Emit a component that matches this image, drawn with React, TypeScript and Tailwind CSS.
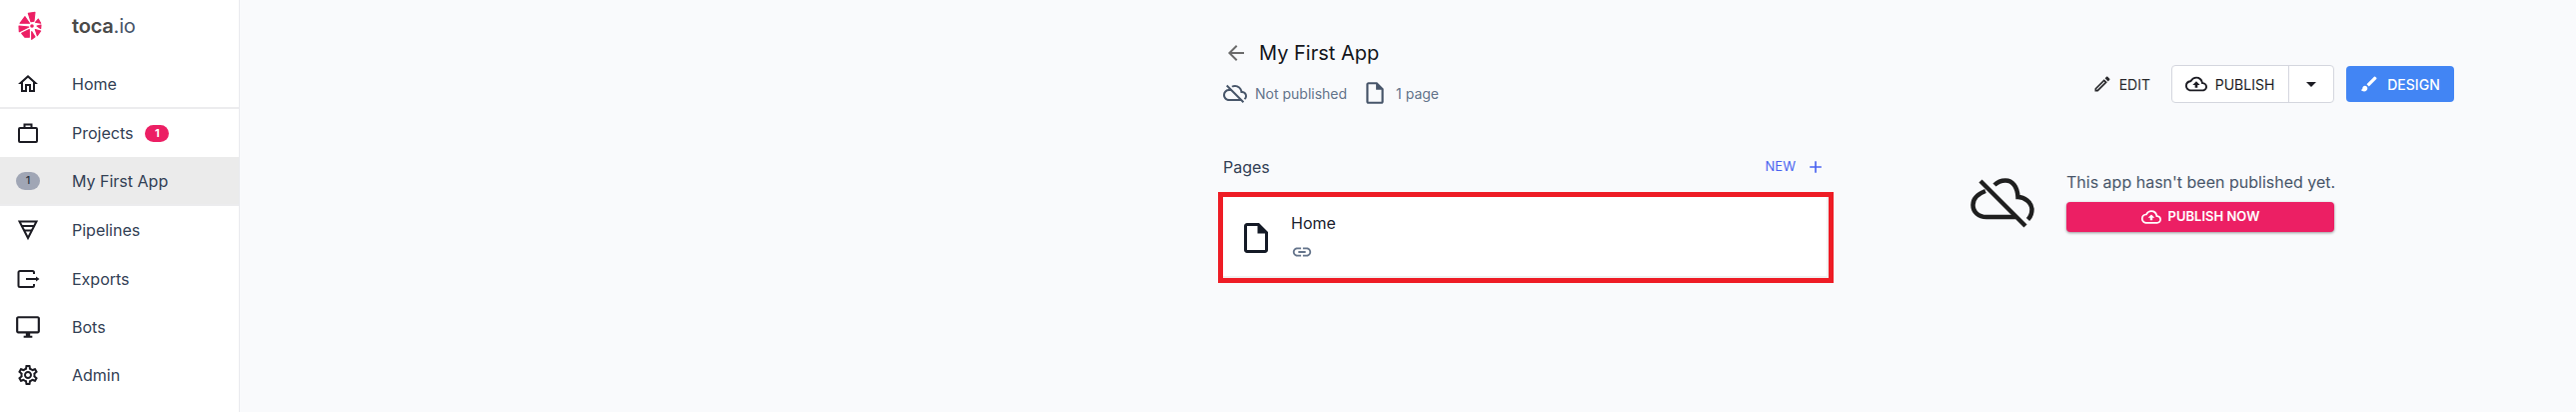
import React from "react";
import {
  MdOutlineHome, MdOutlineDesktopWindows, MdOutlineSettings, MdOutlineCloudOff, MdOutlineCloudUpload,
  MdOutlineEdit, MdBrush, MdOutlineInsertDriveFile, MdLink, MdArrowBack, MdArrowDropDown, MdAdd,
} from "react-icons/md";

const Logo = () => (
  <svg width="24" height="30" viewBox="0 0 24 30" className="shrink-0">
    <g fill="#ec1f64" stroke="#ec1f64" strokeWidth="1.100" strokeLinejoin="round">
      <path d="M10.300 2.300 17 1.300 16 10.300 13 10.800Z" />
      <path d="M2 12.300 7 5.700 11.500 12.300Z" />
      <path d="M1 15 10.800 16 1.300 20.700Z" />
      <path d="M3.700 22.300 11.300 18.500 11.300 26.300 7 26.300Z" />
      <path d="M13.700 20.500 17 25.700 13.700 28.300Z" />
      <path d="M17.300 18.500 22.700 20 19.300 24.700Z" />
      <path d="M19 15 23 14 22.700 17.500Z" />
      <path d="M17.500 11.300 20.300 8 22.700 12.300Z" />
    </g>
    <circle cx="14" cy="15" r="1.800" fill="#ec1f64" />
  </svg>
);

const Briefcase = () => (
  <svg width="24" height="24" viewBox="0 0 24 24" fill="none" stroke="currentColor" strokeWidth="2">
    <rect x="3" y="7" width="18" height="14" rx="1" />
    <path d="M8.500 7V3.500h7V7" />
  </svg>
);
const Pipeline = () => (
  <svg width="24" height="24" viewBox="0 0 24 24" fill="none" stroke="currentColor" strokeWidth="2">
    <path d="M3.500 3.500h17L12 20Z" strokeLinejoin="miter" />
    <path d="M5 8h14M8 12.500h8" />
  </svg>
);
const ExportIcon = () => (
  <svg width="24" height="24" viewBox="0 0 24 24" fill="none" stroke="currentColor" strokeWidth="2">
    <path d="M18 7V5.500A1.500 1.500 0 0 0 16.500 4H4A1.500 1.500 0 0 0 2.500 5.500v13A1.500 1.500 0 0 0 4 20h12.500a1.500 1.500 0 0 0 1.500-1.500V17" />
    <path d="M10 12h11" />
    <path d="M20 9.500 23.500 12 20 14.500Z" fill="currentColor" stroke="none" />
  </svg>
);
const BigCloudOff = () => (
  <svg width="64" height="50" viewBox="0 0 64 50" fill="none" stroke="#1f1f1f" strokeWidth="4.500">
    <path d="M10 3 L55 48" />
    <path d="M24 7C27 4 31 2.500 35 2.500C42 2.500 47 8.500 47.500 19C54 19 61 24.500 61.500 31C61.500 36 60 39 57.500 41.500" />
    <path d="M15 13C7 16 2.500 21 2.500 27C2.500 34 8 39 16 39H45" />
  </svg>
);

const rows = [
  { label: "Home", icon: <MdOutlineHome size={24} />, border: true, h: "h-[49px]" },
  { label: "Projects", icon: <Briefcase />, badge: true, h: "h-[48px]" },
  { label: "My First App", num: true, active: true, h: "h-[49px]" },
  { label: "Pipelines", icon: <Pipeline />, h: "h-[48px]" },
  { label: "Exports", icon: <ExportIcon />, h: "h-[49px]" },
  { label: "Bots", icon: <MdOutlineDesktopWindows size={26} />, h: "h-[48px]" },
  { label: "Admin", icon: <MdOutlineSettings size={24} />, h: "h-[48px]" },
];

export default function App() {
  return (
    <div className="flex h-[412px] w-[2578px] overflow-hidden bg-[#f9fafc] font-['Inter',sans-serif] text-[#334155]">
      <aside className="h-full w-[240px] shrink-0 border-r border-[#e9eaee] bg-white">
        <div className="flex h-[60px] items-center pb-[8px] pl-[18px]">
          <Logo />
          <span className="ml-[30px] text-[20px] tracking-[-0.2px]">
            <span className="font-semibold text-[#4a4a4a]">toca</span>
            <span className="font-normal text-[#475569]">.io</span>
          </span>
        </div>
        {rows.map((r) => (
          <div
            key={r.label}
            className={`flex items-center ${r.h} ${r.border ? "border-b-2 border-[#ececee]" : ""} ${r.active ? "border-b-2 border-[#ececee] bg-[#ebebeb]" : ""}`}
          >
            <div className="flex w-[72px] shrink-0 justify-center pr-[16px] text-[#1b1b22]">
              {r.num ? (
                <span className="flex h-[18px] w-[24px] items-center justify-center rounded-full bg-[#a0a6b5] text-[11px] font-medium text-[#2c3340]">1</span>
              ) : r.icon}
            </div>
            <span className="text-[16px] leading-none text-[#334155]">{r.label}</span>
            {r.badge && (
              <span className="ml-[12px] flex h-[17px] w-[24px] items-center justify-center rounded-full bg-[#ec1f64] text-[11px] font-bold text-white">1</span>
            )}
          </div>
        ))}
      </aside>
      <main className="flex-1 pl-[980px]">
        <div className="flex w-[1236px] items-start justify-between pl-[4px] pt-[41px]">
          <div>
            <div className="flex h-[24px] items-center">
              <MdArrowBack size={24} className="ml-[1px] text-[#6b6b6b]" />
              <h1 className="ml-[11px] text-[20px] font-normal leading-none text-[#14161c]">My First App</h1>
            </div>
            <div className="mt-[18px] flex h-[20px] items-center text-[14px] text-[#64748b]">
              <MdOutlineCloudOff size={24} className="text-[#475569]" />
              <span className="ml-[8px]">Not published</span>
              <MdOutlineInsertDriveFile size={26} className="ml-[15px] text-[#475569]" />
              <span className="ml-[8px]">1 page</span>
            </div>
          </div>
          <div className="mt-[24px] flex items-center">
            <MdOutlineEdit size={20} className="text-[#27272a]" />
            <span className="ml-[7px] text-[14px] font-normal text-[#27272a]">EDIT</span>
            <div className="ml-[21px] flex h-[38px] w-[163px] items-stretch rounded-[4px] border border-[#d4d6de] bg-white text-[#1b1b22]">
              <div className="flex w-[117px] items-center justify-center gap-[8px] border-r border-[#d4d6de] pr-[1px]">
                <MdOutlineCloudUpload size={22} />
                <span className="text-[14px]">PUBLISH</span>
              </div>
              <div className="flex flex-1 items-center justify-center">
                <MdArrowDropDown size={24} />
              </div>
            </div>
            <button className="ml-[12px] flex h-[36px] w-[108px] items-center justify-center gap-[8px] rounded-[4px] bg-[#4285f4] pr-[1px] text-[14px] font-medium text-white">
              <MdBrush size={20} />
              DESIGN
            </button>
          </div>
        </div>
        <div className="mt-[53px] flex w-[1236px] items-start">
          <section className="w-[616px]">
            <div className="flex h-[22px] items-center justify-between pl-[4px] pr-[9px]">
              <span className="text-[16px] text-[#334155]">Pages</span>
              <span className="flex items-center text-[13px] text-[#4a63f0]">
                NEW
                <MdAdd size={20} className="ml-[10px]" />
              </span>
            </div>
            <div className="ml-[-1px] mr-[1px] mt-[14px] flex h-[91px] items-center border-[5px] border-[#ee1c25] bg-white pl-[15px] shadow-[inset_-2px_-2px_0_#f0f0f0]">
              <MdOutlineInsertDriveFile size={36} className="text-[#141a26]" />
              <div className="ml-[17px] pt-[1px]">
                <div className="text-[16px] leading-[20px] text-[#1b2230]">Home</div>
                <MdLink size={22} className="mt-[8px] text-[#64748b]" />
              </div>
            </div>
          </section>
          <section className="ml-[136px] flex items-start pt-[16px]">
            <div className="mt-[6px]"><BigCloudOff /></div>
            <div className="ml-[32px] w-[268px]">
              <div className="whitespace-nowrap text-[16px] leading-[20px] text-[#475569]">This app hasn't been published yet.</div>
              <button className="mt-[10px] flex h-[30px] w-full items-center justify-center gap-[7px] rounded-[4px] bg-[#ec1f64] text-[13px] font-semibold text-white shadow-[0_1px_3px_rgba(0,0,0,0.4)]">
                <MdOutlineCloudUpload size={20} />
                PUBLISH NOW
              </button>
            </div>
          </section>
        </div>
      </main>
    </div>
  );
}
